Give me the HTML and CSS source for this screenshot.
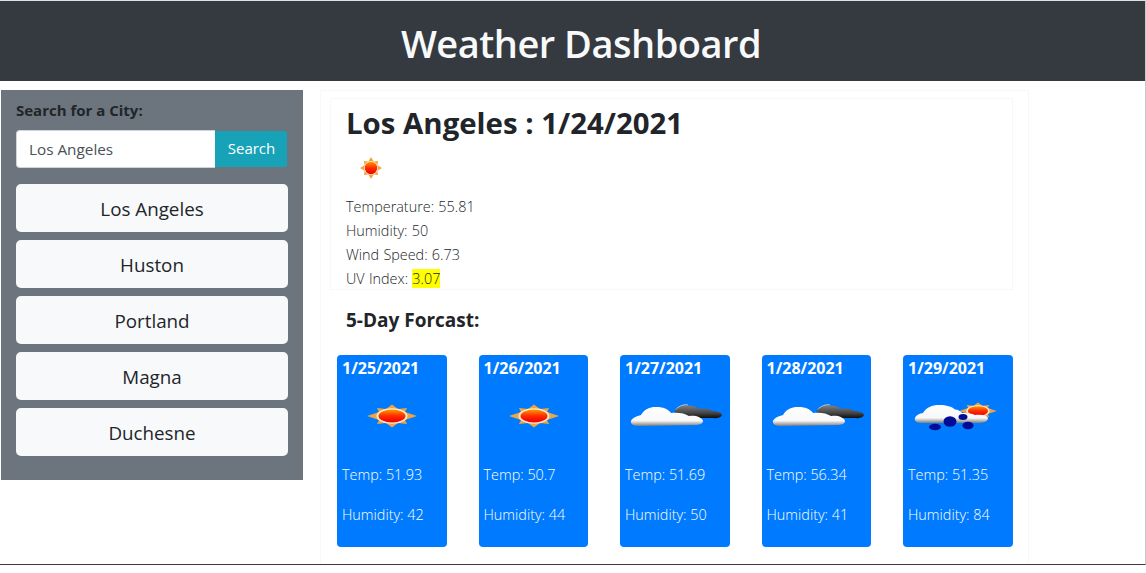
FILE: index.html
```html
<!DOCTYPE html>
<html lang="en">
<head>
<meta charset="utf-8">
<title>Weather Dashboard</title>
<link rel="stylesheet" href="styles.css">
</head>
<body>
<svg class="defs" width="0" height="0" aria-hidden="true">
  <defs>
    <linearGradient id="sunCore" x1="0" y1="0" x2="0" y2="1">
      <stop offset="0" stop-color="#ff9a00"/>
      <stop offset="0.5" stop-color="#ff2a00"/>
      <stop offset="1" stop-color="#ee0000"/>
    </linearGradient>
    <linearGradient id="cloudWhite" x1="0" y1="0" x2="0" y2="1">
      <stop offset="0" stop-color="#ffffff"/>
      <stop offset="0.72" stop-color="#f8f8f8"/>
      <stop offset="1" stop-color="#7d7d7d"/>
    </linearGradient>
    <linearGradient id="cloudDark" x1="0" y1="0" x2="0" y2="1">
      <stop offset="0" stop-color="#808080"/>
      <stop offset="0.6" stop-color="#444444"/>
      <stop offset="1" stop-color="#0d0d0d"/>
    </linearGradient>
    <g id="sun">
      <path fill="#eda544" d="M25 3.5 31 8 40 7 38 11 50 15 38 19 40 23 31 22 25 26.5 19 22 10 23 12 19 0 15 12 11 10 7 19 8Z"/>
      <ellipse cx="25" cy="15" rx="15.5" ry="7.8" fill="#ffeccb"/>
      <ellipse cx="25" cy="15" rx="13.5" ry="6.4" fill="url(#sunCore)"/>
    </g>
    <g id="overcast">
      <path fill="none" stroke="#c4c4c4" stroke-width="1.2" d="M51 14C53 10.500 58 8.500 63 9"/>
      <path fill="url(#cloudDark)" d="M49 16C52 11 58 9 63 9.500 68 9.500 72 11 74 13 80 11.500 85 13 87 15 92 15 97 17 97 19 96 22 91 22.500 87 22H60Z"/>
      <path fill="url(#cloudWhite)" d="M6 25C7 22 12 20 16 19 19 13 26 10.500 32 11 38 11 43 13 46 17 52 16 60 17 64 20 70 19 77 21 78 25 78 28 74 29 70 29L14 30C9 30 5 28 6 25Z"/>
    </g>
  </defs>
</svg>
<header class="banner"><h1>Weather Dashboard</h1></header>
<div class="layout">
  <aside class="sidebar">
    <label class="search-label" for="city">Search for a City:</label>
    <div class="search-row">
      <input id="city" class="search-input" type="text" value="Los Angeles">
      <button class="search-btn" type="button">Search</button>
    </div>
    <ul class="cities">
      <li class="city">Los Angeles</li>
      <li class="city">Huston</li>
      <li class="city">Portland</li>
      <li class="city">Magna</li>
      <li class="city">Duchesne</li>
    </ul>
  </aside>
  <main class="main">
    <section class="today">
      <h2>Los Angeles : 1/24/2021</h2>
      <svg class="today-icon" viewBox="0 0 24 24" width="24" height="24" aria-hidden="true">
        <path fill="#f2a53c" d="M12 1 14.700 5.500 19 5 18.500 9.300 23 12 18.500 14.700 19 19 14.700 18.500 12 23 9.300 18.500 5 19 5.500 14.700 1 12 5.500 9.300 5 5 9.300 5.500Z"/>
        <circle cx="12" cy="12" r="7" fill="#ffeccb"/>
        <circle cx="12" cy="12" r="6.200" fill="url(#sunCore)"/>
      </svg>
      <p>Temperature: 55.81</p>
      <p>Humidity: 50</p>
      <p>Wind Speed: 6.73</p>
      <p>UV Index: <mark>3.07</mark></p>
    </section>
    <h3>5-Day Forcast:</h3>
    <div class="forecast">
      <article class="day">
        <h4>1/25/2021</h4>
        <svg class="day-icon" viewBox="0 0 100 40" aria-hidden="true"><use href="#sun" x="25" y="5"/></svg>
        <p>Temp: 51.93</p>
        <p>Humidity: 42</p>
      </article>
      <article class="day">
        <h4>1/26/2021</h4>
        <svg class="day-icon" viewBox="0 0 100 40" aria-hidden="true"><use href="#sun" x="25" y="5"/></svg>
        <p>Temp: 50.7</p>
        <p>Humidity: 44</p>
      </article>
      <article class="day">
        <h4>1/27/2021</h4>
        <svg class="day-icon" viewBox="0 0 100 40" aria-hidden="true"><use href="#overcast"/></svg>
        <p>Temp: 51.69</p>
        <p>Humidity: 50</p>
      </article>
      <article class="day">
        <h4>1/28/2021</h4>
        <svg class="day-icon" viewBox="0 0 100 40" aria-hidden="true"><use href="#overcast"/></svg>
        <p>Temp: 56.34</p>
        <p>Humidity: 41</p>
      </article>
      <article class="day">
        <h4>1/29/2021</h4>
        <svg class="day-icon" viewBox="0 0 100 40" aria-hidden="true">
          <use href="#sun" transform="translate(51.250 3.750) scale(.75)"/>
          <path fill="url(#cloudWhite)" d="M7 22C8 19 12 17.500 15 17 18 11 26 8.500 32 9 38 9 44 10.500 47 13.500 50 13.500 53 15.500 54 17 60 17 64 17.500 67 19 72 18 79 19 80 22 80 25 76 27 70 27H14C9 27 6 25 7 22Z"/>
          <g fill="#000c96"><ellipse cx="27" cy="31" rx="6" ry="3.300"/><ellipse cx="42" cy="25.500" rx="6.500" ry="5.200"/><ellipse cx="60" cy="29.500" rx="5.500" ry="3.800"/><ellipse cx="55" cy="21" rx="4.500" ry="3"/></g>
        </svg>
        <p>Temp: 51.35</p>
        <p>Humidity: 84</p>
      </article>
    </div>
  </main>
</div>
</body>
</html>
```
FILE: styles.css
```css
* { box-sizing: border-box; }
html, body { height: 100%; }
body {
  margin: 0;
  height: 565px;
  border-top: 1px solid #dfe0e2;
  border-right: 1px solid #c8c8c8;
  border-bottom: 1px solid #3a3a3a;
  font-family: "Open Sans", "Noto Sans", sans-serif;
  font-weight: 300;
  font-size: 16px;
  line-height: 24px;
  color: #212529;
  background: #fff;
  overflow: hidden;
}
.defs { position: absolute; }
.banner {
  height: 80px;
  padding-top: 4px;
  background: #343a40;
  display: flex;
  align-items: center;
  justify-content: center;
}
.banner h1 {
  margin: 0 0 0 17px;
  font-size: 38px;
  letter-spacing: -0.5px;
  line-height: 48px;
  font-weight: 600;
  color: #f8f9fa;
}
.layout {
  display: flex;
  align-items: flex-start;
  padding: 9px 0 0 1px;
}
.sidebar {
  width: 302px;
  height: 390px;
  background: #6c757d;
  padding: 8px 15px 0;
  flex: none;
}
.search-label {
  display: block;
  height: 24px;
  font-weight: 700;
  font-size: 15px;
  line-height: 24px;
  color: #212529;
}
.search-row {
  display: flex;
  align-items: center;
  margin-top: 8px;
  height: 38px;
  width: 272px;
}
.search-input {
  width: 199px;
  height: 38px;
  padding: 0 12px;
  border: 1px solid #ced4da;
  border-right: 0;
  border-radius: 4px 0 0 4px;
  font: 400 15.300px/24px "Open Sans", "Noto Sans", sans-serif;
  color: #495057;
  background: #fff;
}
.search-btn {
  width: 72px;
  height: 36px;
  border: 0;
  border-radius: 0 2px 2px 0;
  background: #17a2b8;
  color: #fff;
  font: 400 15px/24px "Open Sans", "Noto Sans", sans-serif;
  padding: 0 0 2px 1px;
}
.cities {
  list-style: none;
  margin: 16px 0 0;
  padding: 0;
  display: flex;
  flex-direction: column;
  gap: 8px;
}
.city {
  width: 272px;
  height: 48px;
  background: #f8f9fa;
  border-radius: 5px;
  font-weight: 400;
  font-size: 18.800px;
  line-height: 50px;
  text-align: center;
  color: #212529;
}
.main {
  width: 709px;
  height: 474px;
  margin-left: 17px;
  padding: 7px 0 0 9px;
  border: 1px solid #f8f8f8;
  border-bottom: 0;
  flex: none;
}
.today {
  width: 683px;
  height: 192px;
  padding: 0 15px;
  border: 1px solid #f8f8f8;
}
.today h2 {
  margin: 4px 0 0;
  font-size: 29.400px;
  line-height: 40px;
  font-weight: 700;
  color: #212529;
}
.today-icon { display: block; margin: 13px 0 15px 13px; }
.today p { margin: 0; font-size: 14.400px; word-spacing: .5px; line-height: 24px; }
mark { background: #ffff00; color: #212529; }
.main h3 {
  margin: 16px 0 0 16px;
  font-size: 19px;
  line-height: 28px;
  font-weight: 700;
  color: #212529;
}
.forecast {
  display: flex;
  gap: 32px;
  margin: 21px 0 0 7px;
}
.day {
  width: 109.500px;
  height: 192px;
  flex: none;
  background: #007bff;
  border-radius: 4px;
  padding: 1px 5px 0;
  color: #fff;
}
.day h4 {
  margin: 0;
  font-size: 16px;
  line-height: 24px;
  font-weight: 700;
  color: #fff;
}
.day-icon { display: block; width: 100px; height: 40px; margin: 16px 0 27px; filter: blur(.45px); }
.day p { margin: 0 0 16px; font-size: 14.400px; line-height: 24px; }
```
